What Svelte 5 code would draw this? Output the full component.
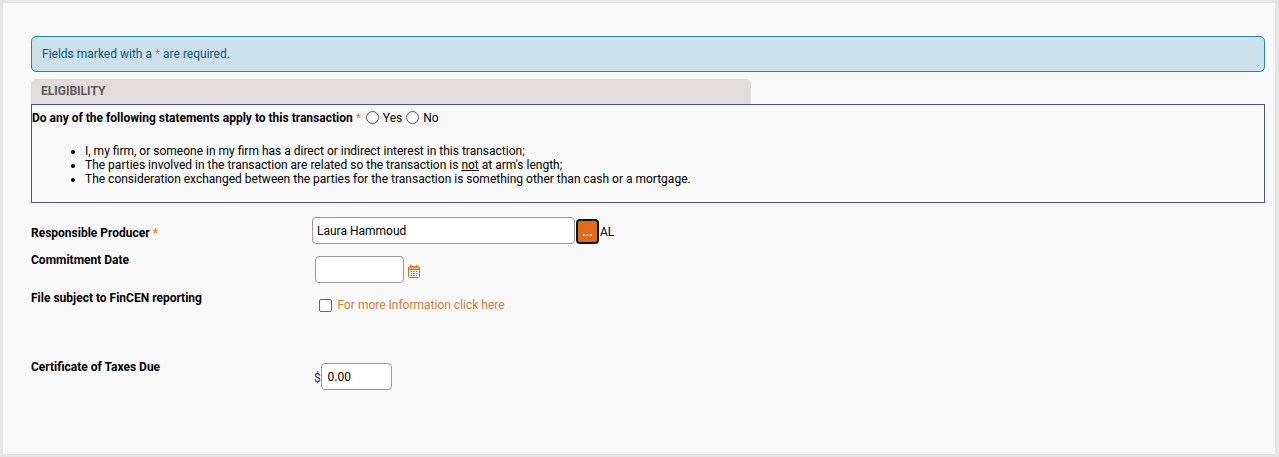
<script>
  let yesNo = $state('');
  const points = [
    'I, my firm, or someone in my firm has a direct or indirect interest in this transaction;',
    null,
    'The consideration exchanged between the parties for the transaction is something other than cash or a mortgage.'
  ];
</script>

<div class="frame">
  <div class="page">
    <div class="alert">Fields marked with a <span class="req">*</span> are required.</div>

    <div class="section-head">ELIGIBILITY</div>
    <div class="section-box">
      <div class="question">
        <b>Do any of the following statements apply to this transaction</b>
        <span class="req">*</span>
        <label class="radio"><input type="radio" name="yesno" value="yes" bind:group={yesNo} />Yes</label>
        <label class="radio"><input type="radio" name="yesno" value="no" bind:group={yesNo} />No</label>
      </div>
      <ul>
        {#each points as p}
          {#if p}
            <li>{p}</li>
          {:else}
            <li>The parties involved in the transaction are related so the transaction is <u>not</u> at arm's length;</li>
          {/if}
        {/each}
      </ul>
    </div>

    <div class="row producer">
      <div class="lbl">Responsible Producer <span class="req">*</span></div>
      <div class="field">
        <input class="txt name" type="text" value="Laura Hammoud" />
        <button class="more" type="button">...</button>
        <span class="state">AL</span>
      </div>
    </div>

    <div class="row commitment">
      <div class="lbl">Commitment Date</div>
      <div class="field date">
        <input class="txt datebox" type="text" />
        <svg class="cal" width="14" height="15" viewBox="0 0 14 15" fill="none" stroke="#df6b20">
          <path d="M1.5 3h11v3h-11z" fill="#eda67c" stroke="none" />
          <rect x="1.5" y="2.5" width="11" height="11" rx="1" />
          <path d="M1.5 5.5h11" />
          <path d="M4 .5v3M10 .5v3" />
          <path d="M3.5 7.5h7M3.5 9.5h7M3.5 11.5h7" stroke-dasharray="1.6 1.1" />
        </svg>
      </div>
    </div>

    <div class="row fincen">
      <div class="lbl">File subject to FinCEN reporting</div>
      <div class="field check">
        <input type="checkbox" />
        <a href="#fincen">For more Information click here</a>
      </div>
    </div>

    <div class="row taxes">
      <div class="lbl">Certificate of Taxes Due</div>
      <div class="field money">
        <span class="dollar">$</span>
        <input class="txt amount" type="text" value="0.00" />
      </div>
    </div>
  </div>
</div>

<style>
  :global(body) {
    margin: 0;
    background: #e6e6e6;
  }
  .frame {
    width: 1279px;
    height: 457px;
    box-sizing: border-box;
    padding: 3px 4px 3px 3px;
    font-family: Roboto, "Liberation Sans", sans-serif;
    font-size: 12px;
    color: #000;
  }
  .page {
    height: 451px;
    box-sizing: border-box;
    background: #f9f9f9;
    padding: 33px 10px 0 28px;
  }
  .req {
    color: #e2804a;
  }
  .alert {
    height: 36px;
    box-sizing: border-box;
    border: 1px solid #2b84ab;
    border-radius: 5px;
    background: #cce1ec;
    color: #14567a;
    padding: 0 10px;
    line-height: 34px;
  }
  .section-head {
    width: 720px;
    height: 25px;
    box-sizing: border-box;
    margin-top: 7px;
    background: #e2dcdc;
    border-radius: 5px 5px 0 0;
    padding-left: 10px;
    line-height: 24px;
    font-weight: 700;
    color: #5c5c5c;
  }
  .section-box {
    height: 99px;
    box-sizing: border-box;
    border: 1px solid #4a5290;
  }
  .question {
    display: flex;
    align-items: center;
    gap: 3px;
    height: 25px;
    box-sizing: border-box;
  }
  .question .req {
    margin-right: 1px;
  }
  .radio {
    display: flex;
    align-items: center;
    gap: 3px;
  }
  .radio input {
    width: 13px;
    height: 13px;
    margin: 0 1px;
    appearance: none;
    border: 1px solid #555;
    border-radius: 50%;
    background: #fff;
  }
  ul {
    margin: 14px 0 0;
    padding-left: 53px;
    line-height: 14px;
  }
  .row {
    display: flex;
  }
  .lbl {
    width: 281px;
    flex: none;
    font-weight: 700;
  }
  .field {
    display: flex;
    align-items: center;
    align-self: flex-start;
  }
  .txt {
    box-sizing: border-box;
    border: 1px solid #999;
    border-radius: 4px;
    background: #fff;
    font: inherit;
    color: #000;
    padding: 0 5px;
    margin: 0;
    outline: none;
  }
  .producer {
    margin-top: 14px;
    height: 27px;
  }
  .producer .lbl {
    padding-top: 9px;
  }
  .name {
    width: 263px;
    height: 27px;
    padding-left: 4px;
  }
  .more {
    width: 23px;
    height: 25px;
    margin: 2px 0 0 1px;
    padding: 0;
    box-sizing: border-box;
    border: 2px solid #111;
    border-radius: 4px;
    background: #df6b20;
    color: #fff;
    font: inherit;
    font-weight: 500;
    line-height: 22px;
  }
  .state {
    margin: 2px 0 0 1px;
  }
  .commitment {
    margin-top: 9px;
    height: 36px;
  }
  .date {
    margin: 3px 0 0 3px;
  }
  .datebox {
    width: 89px;
    height: 27px;
  }
  .cal {
    margin: 3px 0 0 3px;
  }
  .fincen {
    height: 71px;
    padding-top: 2px;
    box-sizing: border-box;
  }
  .check {
    margin-left: 7px;
    padding-top: 7px;
  }
  .check input {
    width: 13px;
    height: 13px;
    margin: 0 5.5px 0 0;
    appearance: none;
    border: 1px solid #666;
    border-radius: 2px;
    background: #fff;
  }
  .check a {
    color: #df7a3c;
    text-decoration: none;
  }
  .money {
    margin: 3px 0 0 2px;
  }
  .dollar {
    color: #14406e;
    margin-top: 2px;
    width: 7px;
  }
  .amount {
    width: 71px;
    height: 27px;
    padding-left: 5.5px;
  }
</style>
